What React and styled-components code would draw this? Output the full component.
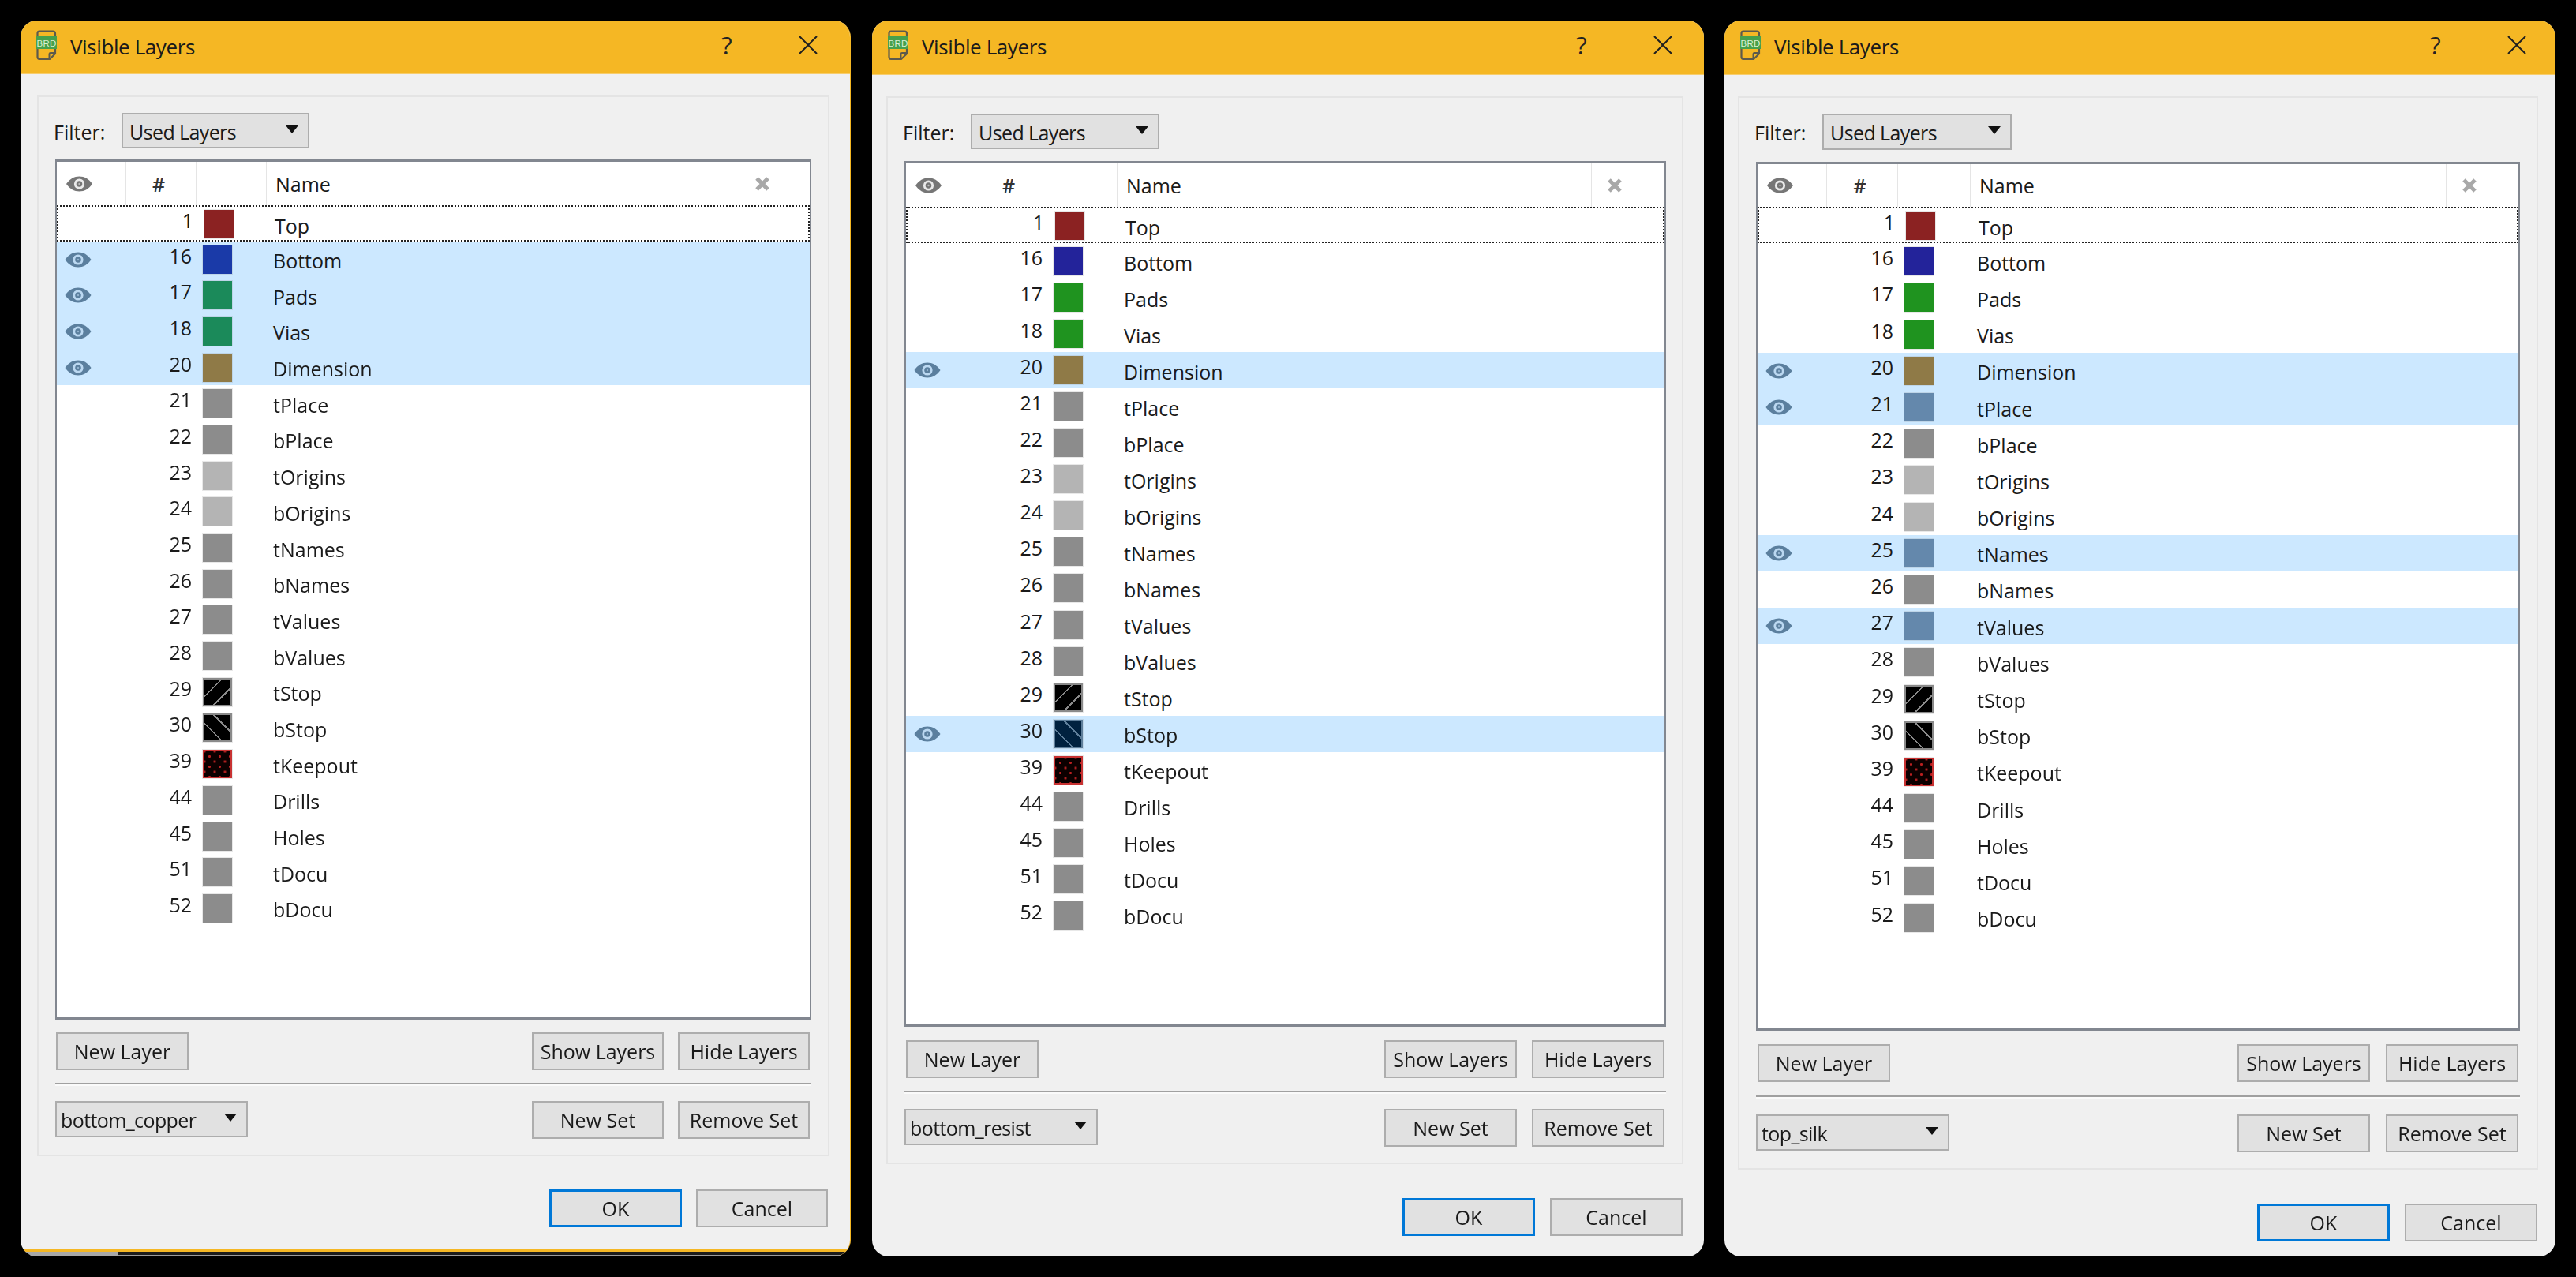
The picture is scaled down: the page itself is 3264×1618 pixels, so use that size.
import React from "react";
import styled, { createGlobalStyle, css } from "styled-components";

const Global = createGlobalStyle`
  html, body { margin: 0; background: #000; }
  body { font-family: "Open Sans", "Noto Sans", sans-serif; color: #1a1a1a; }
`;

const Screen = styled.div`
  display: flex;
  align-items: flex-start;
  width: 3264px;
  height: 1618px;
  box-sizing: border-box;
  padding: 26px 0 0 26px;
  overflow: hidden;
  background: #000;
`;

const Window = styled.section`
  position: relative;
  flex: none;
  display: flex;
  flex-direction: column;
  box-sizing: border-box;
  width: ${(p) => p.$m.w}px;
  height: 1566px;
  margin-left: ${(p) => p.$m.ml}px;
  background: #f0f0f0;
  border-radius: 21px;
  overflow: hidden;
  font-size: 25px;
  filter: blur(0.5px);
  ${(p) => p.$m.edge && css`border-right: 1px solid #f5b724;`}
`;

const TitleBar = styled.header`
  flex: none;
  display: flex;
  align-items: center;
  height: ${(p) => p.$h}px;
  padding: 0 0 6px 19px;
  box-sizing: border-box;
  background: #f5b724;
  border-bottom: 1px solid #f7cd6c;
`;

const TitleText = styled.h1`
  margin: 4px 0 0 16px;
  font-size: 26px;
  font-weight: 400;
  letter-spacing: -0.4px;
  flex: 1;
`;

const HelpMark = styled.span`
  width: 50px;
  font-size: 31px;
  text-align: center;
  margin-right: 66px;
  color: #222;
`;

const CloseMark = styled.svg`
  width: 24px;
  height: 24px;
  margin-right: ${(p) => p.$right}px;
`;

const Panel = styled.div`
  flex: none;
  box-sizing: border-box;
  width: ${(p) => p.$m.panelW}px;
  height: ${(p) => p.$m.panelH}px;
  margin: 27px 0 0 ${(p) => p.$m.panelX}px;
  padding: 20px 0 0 21px;
  border: 2px solid #e4e4e4;
`;

const FilterRow = styled.div`
  display: flex;
  align-items: center;
  height: ${(p) => p.$h}px;
`;

const FilterLabel = styled.label`
  width: 86px;
  margin-left: -2px;
  padding-top: 2px;
`;

const Combo = styled.div`
  flex: none;
  display: flex;
  align-items: center;
  justify-content: space-between;
  box-sizing: border-box;
  width: ${(p) => p.$w}px;
  height: ${(p) => p.$h}px;
  padding: 2px 12px 0 ${(p) => p.$pad}px;
  letter-spacing: -0.6px;
  background: #e1e1e1;
  border: 2px solid #adadad;
`;

const ComboArrow = styled.i`
  width: 0;
  height: 0;
  margin-top: -6px;
  border-left: 8px solid transparent;
  border-right: 8px solid transparent;
  border-top: 10px solid #111;
`;

const Table = styled.div`
  box-sizing: border-box;
  width: ${(p) => p.$m.tableW}px;
  height: ${(p) => p.$m.tableH}px;
  margin-top: ${(p) => p.$m.tableGap}px;
  background: #fff;
  border: 2px solid #828790;
  border-top-width: 3px;
  border-bottom-width: 3px;
`;

const HeaderRow = styled.div`
  display: grid;
  grid-template-columns: ${(p) => p.$cols};
  height: ${(p) => p.$h}px;
`;

const HeaderCell = styled.div`
  display: flex;
  align-items: center;
  justify-content: ${(p) => p.$align || "flex-start"};
  box-sizing: border-box;
  padding-left: ${(p) => p.$pad || 0}px;
  padding-right: ${(p) => p.$padR || 0}px;
  border-right: 1px solid #e5e5e5;
  &:last-child { border-right: 0; }
`;

const HashMark = styled.span`
  font-weight: 600;
  margin-left: -6px;
  color: #333;
`;

const LayerRow = styled.div`
  display: grid;
  grid-template-columns: ${(p) => p.$cols};
  align-items: center;
  box-sizing: border-box;
  height: ${(p) => p.$h}px;
  background: ${(p) => (p.$sel ? "#cce8ff" : "transparent")};
  ${(p) => p.$focus && css`border: 2px dotted #222;`}
`;

const EyeCell = styled.div`
  display: flex;
  justify-content: center;
  padding-right: 34px;
`;

const NumberCell = styled.div`
  text-align: right;
  padding: 0 6px 10px 0;
`;

const SwatchCell = styled.div`
  display: flex;
  padding-left: 8px;
`;

const swatchKinds = {
  plain: css`background: ${(p) => p.$c};`,
  up: css`
    background: repeating-linear-gradient(135deg, ${(p) => p.$c} 0 14.4px, ${(p) => p.$l} 14.4px 16px);
  `,
  down: css`
    background: repeating-linear-gradient(45deg, ${(p) => p.$c} 0 14.4px, ${(p) => p.$l} 14.4px 16px);
  `,
  dots: css`
    background: radial-gradient(circle, #b82020 0 1.2px, transparent 1.9px) 0 0 / 13px 13px,
      radial-gradient(circle, #b82020 0 1.2px, transparent 1.9px) 6.5px 6.5px / 13px 13px, #0c0000;
  `,
};

const Swatch = styled.div`
  box-sizing: border-box;
  width: 37px;
  height: 36px;
  border: 2px solid ${(p) => p.$b || p.$c};
  box-shadow: 0 0 0 1px rgba(128, 128, 128, 0.18);
  ${(p) => swatchKinds[p.$kind || "plain"]}
`;

const NameCell = styled.div`
  padding: 3px 0 0 8px;
  white-space: nowrap;
`;

const ButtonRow = styled.div`
  display: flex;
  align-items: flex-start;
  width: ${(p) => p.$m.tableW}px;
  margin-top: ${(p) => p.$gap}px;
`;

const Spacer = styled.div`
  flex: 1;
`;

const PushButton = styled.button`
  flex: none;
  box-sizing: border-box;
  width: ${(p) => p.$w || 168}px;
  height: 48px;
  margin: 0 ${(p) => p.$mr || 0}px 0 ${(p) => p.$ml || 0}px;
  padding: 0;
  font: inherit;
  color: #1a1a1a;
  background: #e1e1e1;
  border: ${(p) => (p.$primary ? "3px solid #0078d7" : "2px solid #adadad")};
  border-radius: 0;
`;

const Separator = styled.hr`
  box-sizing: border-box;
  width: ${(p) => p.$m.tableW}px;
  height: 4px;
  margin: ${(p) => p.$m.sepGap}px 0 ${(p) => p.$m.sepAfter}px;
  border: 0;
  border-top: 2px solid #a0a0a0;
  border-bottom: 2px solid #fafafa;
`;

const DialogActions = styled.div`
  flex: none;
  display: flex;
  justify-content: flex-end;
  gap: ${(p) => p.$m.okSpace}px;
  margin-top: ${(p) => p.$m.okGap}px;
  padding-right: ${(p) => p.$m.okRight}px;
`;

const TaskStrip = styled.div`
  position: absolute;
  left: 0;
  right: 0;
  bottom: 0;
  height: 9px;
  border-top: 3px solid #f5b724;
  background: linear-gradient(#1b1b1b 0 4px, #9a9a9a 4px);
  box-sizing: border-box;
`;

const TaskProgress = styled.div`
  width: 123px;
  height: 100%;
  background: #a8a8a8;
`;

const AppIcon = styled.svg`
  width: 28px;
  height: 40px;
  flex: none;
`;

const EyeIcon = styled.svg`
  display: block;
  width: ${(p) => p.$w}px;
  height: ${(p) => p.$h}px;
`;

const CrossIcon = styled.svg`
  width: 20px;
  height: 20px;
`;

function Eye({ color, bg, w = 34, h = 20 }) {
  return (
    <EyeIcon $w={w} $h={h} viewBox="0 0 34 20">
      <path d="M0.5 10C5 3.5 10.5 0.5 17 0.5S29 3.5 33.5 10C29 16.5 23.5 19.5 17 19.5S5 16.5 0.5 10Z" fill={color} />
      <circle cx="17" cy="10" r="6.6" fill={bg} opacity="0.85" />
      <circle cx="17" cy="10" r="3.8" fill={color} />
      <circle cx="17" cy="10" r="1.2" fill={bg} opacity="0.5" />
    </EyeIcon>
  );
}

function BrdIcon() {
  return (
    <AppIcon viewBox="0 0 28 40">
      <path d="M5 2.5H22Q25 2.5 25 5.5V31L18 38H5Q2.5 38 2.5 35V5Q2.5 2.5 5 2.5Z" fill="#f5b724" stroke="#5d5a4c" strokeWidth="2.2" />
      <path d="M25 30H19Q17.5 30 17.5 32V38" fill="none" stroke="#5d5a4c" strokeWidth="2" />
      <rect x="1" y="9" width="26" height="16" fill="#47a04c" />
      <text x="14" y="21.5" textAnchor="middle" fontSize="11.5" fontFamily="Liberation Sans, sans-serif" fill="#d8f0d4" letterSpacing="0.2">BRD</text>
    </AppIcon>
  );
}

const GRAY = "#8c8c8c";
const LIGHT = "#b4b4b4";
const GRAY_SEL = "#6488ac";

const LAYERS = [
  { n: 1, name: "Top", c: "#8b2222", s: "#8b2222" },
  { n: 16, name: "Bottom", c: "#23239a", s: "#1a3aa8" },
  { n: 17, name: "Pads", c: "#1f931f", s: "#1b8a5a" },
  { n: 18, name: "Vias", c: "#1f931f", s: "#1b8a5a" },
  { n: 20, name: "Dimension", c: "#8f7a47", s: "#8f7a47" },
  { n: 21, name: "tPlace", c: GRAY, s: GRAY_SEL },
  { n: 22, name: "bPlace", c: GRAY, s: GRAY_SEL },
  { n: 23, name: "tOrigins", c: LIGHT, s: LIGHT },
  { n: 24, name: "bOrigins", c: LIGHT, s: LIGHT },
  { n: 25, name: "tNames", c: GRAY, s: GRAY_SEL },
  { n: 26, name: "bNames", c: GRAY, s: GRAY_SEL },
  { n: 27, name: "tValues", c: GRAY, s: GRAY_SEL },
  { n: 28, name: "bValues", c: GRAY, s: GRAY_SEL },
  { n: 29, name: "tStop", kind: "up", c: "#000", l: "#8a8a8a", b: "#8a8a8a" },
  { n: 30, name: "bStop", kind: "down", c: "#000", l: "#8a8a8a", b: "#8a8a8a", sc: "#00213f", sl: "#5e7e9a", sb: "#5e7e9a" },
  { n: 39, name: "tKeepout", kind: "dots", c: "#0c0000", b: "#c83232" },
  { n: 44, name: "Drills", c: GRAY, s: GRAY_SEL },
  { n: 45, name: "Holes", c: GRAY, s: GRAY_SEL },
  { n: 51, name: "tDocu", c: GRAY, s: GRAY_SEL },
  { n: 52, name: "bDocu", c: GRAY, s: GRAY_SEL },
];

const DIALOGS = [
  {
    m: {
      ml: 0, w: 1052, edge: true, title: 68, closeRight: 41, panelX: 21, panelW: 1004, panelH: 1344,
      filterH: 45, tableW: 958, tableH: 1090, tableGap: 14, headH: 55, rowH: 45.7,
      btnGap: 16, sepGap: 16, sepAfter: 19, okGap: 42, okRight: 28, okSpace: 18, comboW: 238, setW: 244,
      leftBtn: 1, btnW: 167, btnSpace: 18,
    },
    cols: "88px 89px 89px 599px 1fr",
    setName: "bottom_copper",
    visible: [16, 17, 18, 20],
    strip: true,
  },
  {
    m: {
      ml: 27, w: 1054, title: 69, closeRight: 40, panelX: 18, panelW: 1010, panelH: 1353,
      filterH: 45, tableW: 965, tableH: 1097, tableGap: 15, headH: 55, rowH: 46.05,
      btnGap: 17, sepGap: 16, sepAfter: 19, okGap: 43, okRight: 27, okSpace: 19, comboW: 239, setW: 245,
      leftBtn: 2, btnW: 168, btnSpace: 19,
    },
    cols: "88px 91px 89px 601px 1fr",
    setName: "bottom_resist",
    visible: [20, 30],
  },
  {
    m: {
      ml: 26, w: 1053, title: 69, closeRight: 37, panelX: 17, panelW: 1014, panelH: 1360,
      filterH: 46, tableW: 968, tableH: 1101, tableGap: 15, headH: 54, rowH: 46.2,
      btnGap: 17, sepGap: 17, sepAfter: 20, okGap: 43, okRight: 23, okSpace: 19, comboW: 240, setW: 245,
      leftBtn: 2, btnW: 168, btnSpace: 20,
    },
    cols: "88px 90px 92px 603px 1fr",
    setName: "top_silk",
    visible: [20, 21, 25, 27],
  },
];

function LayerLine({ layer, sel, focus, cols, h }) {
  const c = sel && layer.sc ? layer.sc : sel && layer.s ? layer.s : layer.c;
  const l = sel && layer.sl ? layer.sl : layer.l;
  const b = sel && layer.sb ? layer.sb : layer.b;
  return (
    <LayerRow $sel={sel} $focus={focus} $cols={cols} $h={h}>
      <EyeCell>{sel && <Eye color="#5b7f9e" bg="#cce8ff" />}</EyeCell>
      <NumberCell>{layer.n}</NumberCell>
      <SwatchCell>
        <Swatch $kind={layer.kind} $c={c} $l={l} $b={b} />
      </SwatchCell>
      <NameCell>{layer.name}</NameCell>
      <div />
    </LayerRow>
  );
}

function Dialog({ m, cols, setName, visible, strip }) {
  return (
    <Window $m={m}>
      <TitleBar $h={m.title}>
        <BrdIcon />
        <TitleText>Visible Layers</TitleText>
        <HelpMark>?</HelpMark>
        <CloseMark $right={m.closeRight} viewBox="0 0 24 24">
          <path d="M1 1L23 23M23 1L1 23" stroke="#1f1f1f" strokeWidth="2" fill="none" />
        </CloseMark>
      </TitleBar>
      <Panel $m={m}>
        <FilterRow $h={m.filterH}>
          <FilterLabel>Filter:</FilterLabel>
          <Combo $w={m.comboW} $h={m.filterH} $pad={8}>
            Used Layers
            <ComboArrow />
          </Combo>
        </FilterRow>
        <Table $m={m}>
          <HeaderRow $cols={cols} $h={m.headH}>
            <HeaderCell $align="center" $padR={30}>
              <Eye color="#767676" bg="#ffffff" w={37} h={20} />
            </HeaderCell>
            <HeaderCell $align="center">
              <HashMark>#</HashMark>
            </HeaderCell>
            <HeaderCell />
            <HeaderCell $pad={11}>Name</HeaderCell>
            <HeaderCell $pad={19}>
              <CrossIcon viewBox="0 0 20 20">
                <path d="M3 3L17 17M17 3L3 17" stroke="#a8a8a8" strokeWidth="5" fill="none" />
              </CrossIcon>
            </HeaderCell>
          </HeaderRow>
          {LAYERS.map((layer, i) => (
            <LayerLine
              key={layer.n}
              layer={layer}
              sel={visible.includes(layer.n)}
              focus={i === 0}
              cols={cols}
              h={m.rowH}
            />
          ))}
        </Table>
        <ButtonRow $m={m} $gap={m.btnGap}>
          <PushButton $ml={m.leftBtn}>New Layer</PushButton>
          <Spacer />
          <PushButton $w={m.btnW}>Show Layers</PushButton>
          <PushButton $w={m.btnW} $ml={m.btnSpace} $mr={2}>Hide Layers</PushButton>
        </ButtonRow>
        <Separator $m={m} />
        <ButtonRow $m={m} $gap={0}>
          <Combo $w={m.setW} $h={46} $pad={5}>
            {setName}
            <ComboArrow />
          </Combo>
          <Spacer />
          <PushButton $w={m.btnW}>New Set</PushButton>
          <PushButton $w={m.btnW} $ml={m.btnSpace} $mr={2}>Remove Set</PushButton>
        </ButtonRow>
      </Panel>
      <DialogActions $m={m}>
        <PushButton $primary>OK</PushButton>
        <PushButton $w={m.btnW}>Cancel</PushButton>
      </DialogActions>
      {strip && (
        <TaskStrip>
          <TaskProgress />
        </TaskStrip>
      )}
    </Window>
  );
}

export default function App() {
  return (
    <>
      <Global />
      <Screen>
        {DIALOGS.map((d) => (
          <Dialog key={d.setName} {...d} />
        ))}
      </Screen>
    </>
  );
}
